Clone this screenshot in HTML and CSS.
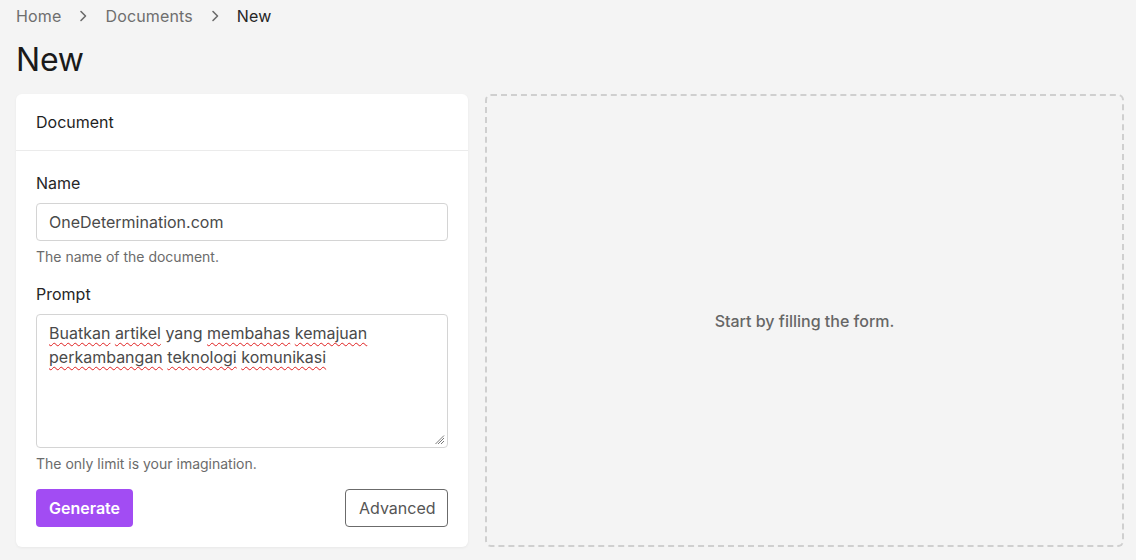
FILE: index.html
```html
<!DOCTYPE html>
<html lang="en">
<head>
<meta charset="utf-8">
<title>New</title>
<link rel="stylesheet" href="styles.css">
</head>
<body>
<div class="page">
  <nav class="crumbs">
    <a class="crumb">Home</a>
    <svg class="chev" viewBox="0 0 16 16" width="16" height="16"><path d="M6 3.5 10.5 8 6 12.5" fill="none" stroke="#6b6b6b" stroke-width="1.6" stroke-linecap="round" stroke-linejoin="round"/></svg>
    <a class="crumb">Documents</a>
    <svg class="chev" viewBox="0 0 16 16" width="16" height="16"><path d="M6 3.5 10.5 8 6 12.5" fill="none" stroke="#6b6b6b" stroke-width="1.6" stroke-linecap="round" stroke-linejoin="round"/></svg>
    <span class="crumb current">New</span>
  </nav>
  <h1 class="title">New</h1>
  <div class="layout">
    <section class="card">
      <header class="card-head">Document</header>
      <div class="card-body">
        <div class="field">
          <label class="label">Name</label>
          <div class="input">OneDetermination.com</div>
          <p class="help">The name of the document.</p>
        </div>
        <div class="field">
          <label class="label">Prompt</label>
          <div class="textarea">
            <span class="sp">Buatkan</span> <span class="sp">artikel</span> yang <span class="sp">membahas</span> <span class="sp">kemajuan</span><br><span class="sp">perkambangan</span> <span class="sp">teknologi</span> <span class="sp">komunikasi</span>
            <svg class="grip" viewBox="0 0 10 10" width="10" height="10"><path d="M9 3 3 9M9 6 6 9M9 0.5 0.5 9" stroke="#7a7a7a" stroke-width="1" fill="none"/></svg>
          </div>
          <p class="help">The only limit is your imagination.</p>
        </div>
        <div class="actions">
          <button class="btn primary">Generate</button>
          <button class="btn outline">Advanced</button>
        </div>
      </div>
    </section>
    <section class="preview">
      <p class="empty">Start by filling the form.</p>
    </section>
  </div>
</div>
</body>
</html>
```
FILE: styles.css
```css
* { box-sizing: border-box; }
html, body { margin: 0; padding: 0; }
body {
  background: #f4f4f4;
  font-family: Inter, "Noto Sans", sans-serif;
  color: #1f2328;
}
.page { padding: 4px 12px 13px 16px; }
.crumbs {
  display: flex;
  align-items: center;
  gap: 16px;
  height: 24px;
  font-size: 16px;
}
.crumb { color: #6e6e6e; letter-spacing: 0.15px; }
.crumb.current { color: #262626; }
.chev { display: block; margin: 0 -2px; }
.title {
  margin: 12px 0 0;
  font-size: 32px;
  font-weight: 400;
  line-height: 40px;
  color: #1a1a1a;
  letter-spacing: -0.2px;
}
.layout {
  display: grid;
  grid-template-columns: 452px 1fr;
  gap: 17px;
  margin-top: 14px;
  height: 452px;
}
.card {
  background: #fff;
  border-radius: 6px;
  box-shadow: 0 1px 3px rgba(0,0,0,0.05);
}
.card-head {
  height: 57px;
  padding: 0 20px;
  display: flex;
  align-items: center;
  font-size: 16px;
  border-bottom: 1px solid #ebebeb;
  color: #1f1f1f;
}
.card-body { padding: 22px 20px 20px; }
.field { margin-bottom: 19px; }
.label {
  display: block;
  font-size: 16px;
  line-height: 20px;
  color: #262626;
  margin-bottom: 10px;
}
.input, .textarea {
  border: 1px solid #d4d4d4;
  border-radius: 4px;
  font-size: 16px;
  color: #4a4a4a;
  padding: 0 12px;
}
.input {
  height: 38px;
  display: flex;
  align-items: center;
}
.textarea {
  position: relative;
  height: 134px;
  padding-top: 6px;
  line-height: 24px;
}
.sp {
  text-decoration: underline wavy #e02020;
  text-decoration-thickness: 1px;
  text-underline-offset: 3px;
}
.grip { position: absolute; right: 2px; bottom: 2px; }
.help {
  margin: 7px 0 0;
  font-size: 14px;
  line-height: 17px;
  color: #6b6b6b;
}
.actions {
  display: flex;
  justify-content: space-between;
  margin-top: -2px;
}
.btn {
  height: 38px;
  font-family: inherit;
  font-size: 16px;
  border-radius: 4px;
  padding: 0 13px;
  cursor: pointer;
}
.btn.primary {
  background: #a24cf3;
  color: #fff;
  border: none;
  font-weight: 600;
  width: 97px;
}
.btn.outline {
  background: #fff;
  border: 1px solid #6b6b6b;
  color: #555;
  width: 103px;
}
.preview {
  border: 2px dashed #cfcfcf;
  border-radius: 6px;
  display: flex;
  align-items: center;
  justify-content: center;
}
.empty {
  margin: 0;
  font-size: 16px;
  color: #666;
  font-weight: 500;
}
```
